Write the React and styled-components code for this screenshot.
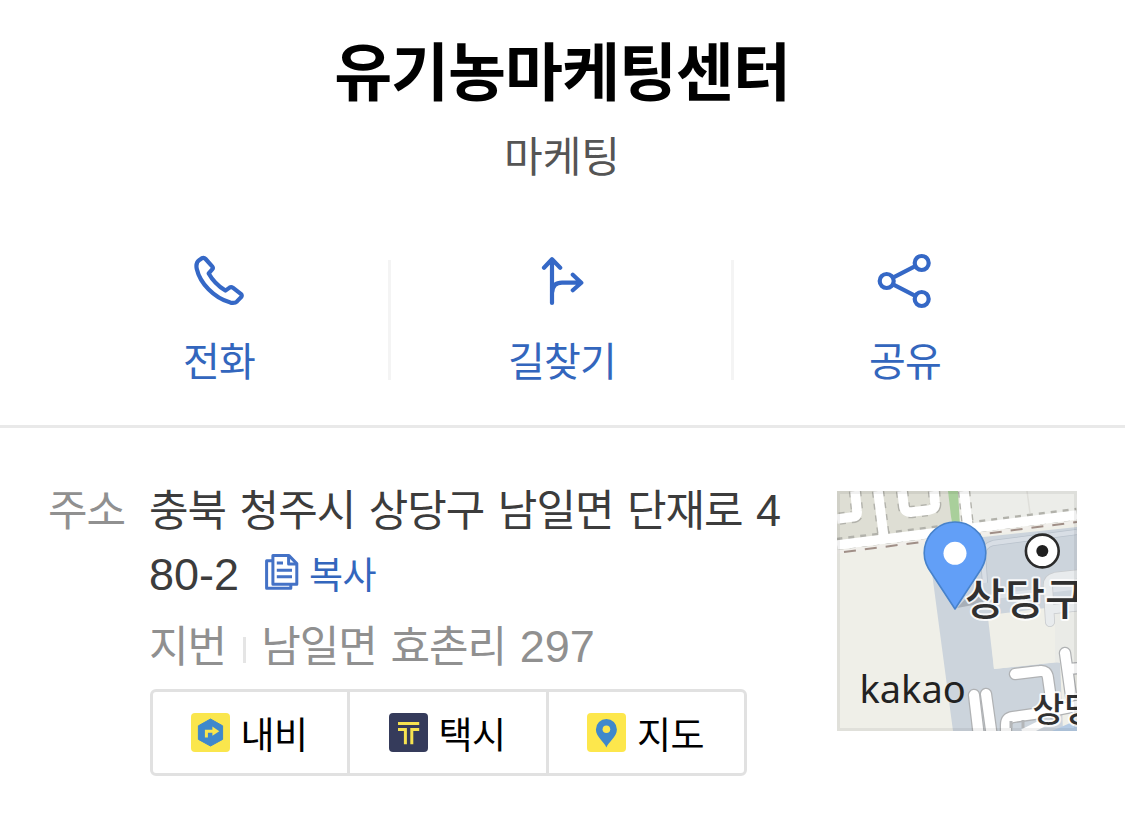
import React from "react"
import styled, { createGlobalStyle } from "styled-components"

const App = () => {
  return (
    <Page>
      <GlobalStyle />
      <Header>
        <Title>유기농마케팅센터</Title>
        <Category>마케팅</Category>
      </Header>
      <Actions>
        <Action>
          <PhoneIcon />
          <ActionLabel>전화</ActionLabel>
        </Action>
        <Action>
          <RouteIcon />
          <ActionLabel>길찾기</ActionLabel>
        </Action>
        <Action>
          <ShareIcon />
          <ActionLabel>공유</ActionLabel>
        </Action>
      </Actions>
      <Info>
        <InfoLabel>주소</InfoLabel>
        <InfoBody>
          <Address>
            충북 청주시 상당구 남일면 단재로 <Num>480-2</Num>
            <CopyButton>
              <CopyIcon />
              <CopyText>복사</CopyText>
            </CopyButton>
          </Address>
          <Jibun>
            지번
            <Bar />
            <span>
              남일면 효촌리 <Num>297</Num>
            </span>
          </Jibun>
          <AppLinks>
            <AppLink>
              <NaviIcon />
              내비
            </AppLink>
            <AppLink>
              <TaxiIcon />
              택시
            </AppLink>
            <AppLink>
              <MapIcon />
              지도
            </AppLink>
          </AppLinks>
        </InfoBody>
        <MapThumb />
      </Info>
    </Page>
  )
}

export default App

const PhoneIcon = () => (
  <LineIcon width="52" height="52" viewBox="0 0 52 52">
    <path d="M6.4 4.9 L8.9 3.2 Q11 2.2 12.6 4 L19.4 11.6 Q20.4 13 19.2 14.4 L15.7 18.4 Q21.3 28.5 32.4 35.6 L36.6 32.6 Q38.2 31.6 39.8 32.7 L47.8 38.9 Q49.4 40.4 48.1 42.1 L44 46.4 Q41.8 48.6 37.4 47.6 C20.7 43 7 28 3.8 14 Q2.4 7.8 6.4 4.9 Z" />
  </LineIcon>
)

const RouteIcon = () => (
  <LineIcon width="44" height="52" viewBox="0 0 44 52">
    <path d="M12 4.5 V48 M4 12.8 L12 4.2 L20.2 12.8 M12.3 37 Q12.8 27.7 22 27.7 H41 M32.8 19.8 L41.3 27.7 L32.8 35.2" />
  </LineIcon>
)

const ShareIcon = () => (
  <LineIcon width="58" height="58" viewBox="0 0 58 58">
    <circle cx="45.7" cy="11" r="7" />
    <circle cx="10.7" cy="29" r="7" />
    <circle cx="45.7" cy="47" r="7" />
    <path d="M17 25.6 L39.3 14.2 M17 32.4 L39.3 43.8" />
  </LineIcon>
)

const CopyIcon = () => (
  <CopySvg width="36" height="38" viewBox="0 0 36 38">
    <path d="M8 7.8 H2.6 V35.2 H26.8 V31.8" />
    <path d="M8.9 2.6 H25 L32.8 10.6 V31.2 H8.9 Z" />
    <path d="M24.6 3 V11 H32.6 M12.8 10 H19 M12.8 17.2 H28 M12.8 23.8 H28" />
  </CopySvg>
)

const NaviIcon = () => (
  <svg width="39" height="39" viewBox="0 0 39 39">
    <rect width="39" height="39" rx="4" fill="#fae64d" />
    <path
      d="M19.5 6 L31.6 12.8 V26.4 L19.5 33 L7.4 26.4 V12.8 Z"
      fill="#3f88cc"
      stroke="#3f88cc"
      strokeLinejoin="round"
    />
    <path d="M15.4 24.6 V18.2 H22" fill="none" stroke="#fae64d" strokeWidth="3" />
    <path d="M21.4 13.6 L28.3 18.2 L21.4 22.8 Z" fill="#fae64d" />
  </svg>
)

const TaxiIcon = () => (
  <svg width="39" height="39" viewBox="0 0 39 39">
    <rect width="39" height="39" rx="4" fill="#353b5b" />
    <path
      d="M9 10.4 H30.2 M9 16.6 H16.4 V31.3 M30.2 16.6 H22.8 V31.3"
      fill="none"
      stroke="#f7e350"
      strokeWidth="3"
    />
  </svg>
)

const MapIcon = () => (
  <svg width="39" height="39" viewBox="0 0 39 39">
    <rect width="39" height="39" rx="4" fill="#fde74c" />
    <path
      d="M19.4 34.4 C17.6 29 8.9 24 8.9 16.4 A10.5 10.5 0 0 1 29.9 16.4 C29.9 24 21.2 29 19.4 34.4 Z"
      fill="#3f88cc"
    />
    <circle cx="19.4" cy="16.2" r="3.8" fill="#fde74c" />
  </svg>
)

const MapThumb = () => (
  <MapSvg width="240" height="240" viewBox="0 0 240 240">
    <rect width="240" height="240" fill="#efefe8" />
    {/* blocks north of the railway */}
    <path d="M0 0 H114 V40 L0 55 Z" fill="#deded4" />
    <path d="M131 0 H240 V24 L131 38 Z" fill="#ecede9" />
    <path d="M190 0 L193 22" stroke="#dfdfda" strokeWidth="1.5" />
    <path d="M111 0 H121 L123 34 H115 Z" fill="#a9cf9b" />
    {/* school grounds */}
    <path
      d="M91 52 L240 36 V113 L152 124 L157 178 L223 171 L226 240 H116 Z"
      fill="#ccd4dc"
    />
    <path d="M151 127 L240 113 V174 L220 171 L157 178 Z" fill="#efefe8" />
    <path d="M218 120 L240 114 V174 L218 171 Z" fill="#eaebe7" />
    <path
      d="M148 92 L146 64 Q146 55 156 52 L240 41"
      fill="none"
      stroke="#b9c2cc"
      strokeWidth="6"
    />
    <path
      d="M148 92 L146 64 Q146 55 156 52 L240 41"
      fill="none"
      stroke="#d8dee5"
      strokeWidth="4.4"
    />
    <path d="M152 106 L240 96" stroke="#dde2e8" strokeWidth="5" />
    <g fill="none" strokeLinecap="round">
      <path
        d="M244 83 L218 86 Q210 88 211 96 L213 131 M217 118 L244 115"
        stroke="#c8cbce"
        strokeWidth="10"
      />
      <path
        d="M244 83 L218 86 Q210 88 211 96 L213 131 M217 118 L244 115"
        stroke="#e8ebed"
        strokeWidth="8.4"
      />
    </g>
    {/* streets */}
    <g fill="none" stroke="#b2b2ab" strokeWidth="12.4" strokeDasharray="6 6">
      <path d="M18 0 L20 20 Q21 26 15 26 L0 28" />
      <path d="M41 0 L47 48" />
      <path d="M65 0 L67 16 Q68 22 75 21 L92 19 Q99 18 98 12 L97 0" />
      <path d="M127 0 L131 36" />
      <path d="M0 53 L240 23" />
    </g>
    <g fill="none" stroke="#fff" strokeWidth="9.6">
      <path d="M18 0 L20 20 Q21 26 15 26 L0 28" />
      <path d="M41 0 L47 48" />
      <path d="M65 0 L67 16 Q68 22 75 21 L92 19 Q99 18 98 12 L97 0" />
      <path d="M127 0 L131 36" />
      <path d="M0 54 L240 24" />
    </g>
    <path d="M0 61 L240 31" stroke="#f1efeb" strokeWidth="3.4" />
    <path
      d="M7 61 L240 31"
      stroke="#a08f87"
      strokeWidth="2"
      strokeDasharray="12 9"
    />
    {/* campus roads */}
    <g fill="none" strokeLinecap="round" strokeLinejoin="round">
      <g stroke="#b0b2b4" strokeWidth="12.5">
        <path d="M178 183 L203 180 Q210 179 211 187 L216 222" />
        <path d="M137 204 L142 246" />
        <path d="M149 203 L155 246" />
        <path d="M228 162 L234 205 M231 178 L244 177" />
        <path d="M169 246 V234 Q169 227 176 226 L204 222 L244 214" />
      </g>
      <g stroke="#fff" strokeWidth="10">
        <path d="M178 183 L203 180 Q210 179 211 187 L216 222" />
        <path d="M137 204 L142 246" />
        <path d="M149 203 L155 246" />
        <path d="M228 162 L234 205 M231 178 L244 177" />
        <path d="M169 246 V234 Q169 227 176 226 L204 222 L244 214" />
      </g>
    </g>
    <path d="M174 230 V237 M186 229 V237" stroke="#b4b6b8" strokeWidth="3" />
    <path d="M186 242 L206 232" stroke="#fff" strokeWidth="8" />
    <path d="M215 240 L240 229 V240 Z" fill="#b5cbe4" />
    <circle cx="205.3" cy="60" r="16.4" fill="#fff" stroke="#2b2b2b" strokeWidth="2.6" />
    <circle cx="205.3" cy="60" r="6" fill="#1f1f1f" />
    <path d="M120 117 L132 104 Q144 104 147 112 Z" fill="#8f969e" opacity=".6" />
    <PlaceName x="128" y="123.5" fontSize="43.5">
      상당구
    </PlaceName>
    <PlaceName x="195.5" y="230.5" fontSize="34.5">
      상당
    </PlaceName>
    <Kakao x="22.5" y="212">
      kakao
    </Kakao>
    <path
      d="M118 118 L91.5 77.5 A30.8 30.8 0 1 1 144.5 77.5 Z"
      fill="#629ff7"
      stroke="#4782cb"
      strokeWidth="1.6"
      strokeLinejoin="round"
    />
    <circle cx="118" cy="62.3" r="11.5" fill="#fff" />
    <rect
      x="1.5"
      y="1.5"
      width="237"
      height="237"
      fill="none"
      stroke="#000"
      strokeOpacity=".06"
      strokeWidth="3"
    />
  </MapSvg>
)

const GlobalStyle = createGlobalStyle`
  body {
    margin: 0;
    background: #fff;
  }
  * {
    box-sizing: border-box;
  }
`

const Page = styled.div`
  width: 1125px;
  height: 814px;
  overflow: hidden;
  background: #fff;
  font-family: "Liberation Sans", "Noto Sans CJK KR", sans-serif;
  color: #3c3c3c;
`

const Header = styled.header`
  padding: 33px 1px 0 0;
  text-align: center;
`

const Title = styled.h1`
  margin: 0;
  font-size: 63px;
  line-height: 80px;
  font-weight: 700;
  letter-spacing: -1px;
  color: #000;
`

const Category = styled.p`
  margin: 15px 0 0;
  font-size: 42px;
  line-height: 60px;
  color: #555;
`

const Actions = styled.nav`
  display: flex;
  height: 240px;
  padding: 72px 48px 0;
  border-bottom: 3px solid #e9e9e9;
`

const Action = styled.div`
  flex: 1;
  display: flex;
  flex-direction: column;
  align-items: center;
  justify-content: space-between;
  height: 120px;
  padding-left: 2px;
  border-right: 3px solid #f4f4f4;

  &:last-child {
    border-color: transparent;
  }
`

const LineIcon = styled.svg`
  margin-top: ${props => (props.height === "58" ? "-8px" : "-5px")};
  fill: none;
  stroke: #3568c6;
  stroke-width: 4.2;
  stroke-linecap: round;
  stroke-linejoin: round;
`

const ActionLabel = styled.span`
  font-size: 40px;
  line-height: 36px;
  letter-spacing: -0.8px;
  color: #3366bd;
`

const Info = styled.section`
  display: flex;
  padding: 51px 48px 0;
`

const InfoLabel = styled.div`
  width: 101px;
  font-size: 43px;
  line-height: 64px;
  letter-spacing: -1px;
  color: #909090;
`

const InfoBody = styled.div`
  width: 645px;
`

const Address = styled.p`
  margin: 0;
  font-size: 43px;
  line-height: 64px;
  letter-spacing: -1px;
  word-spacing: 2.5px;
  word-break: break-all;
`

const Num = styled.span`
  font-size: 45px;
  line-height: 1;
  letter-spacing: 0;
`

const CopyButton = styled.span`
  display: inline-flex;
  align-items: center;
  gap: 9px;
  height: 64px;
  margin-left: 25px;
  vertical-align: top;
  color: #3366bd;
`

const CopySvg = styled.svg`
  margin-bottom: 7px;
  fill: none;
  stroke: #4472c6;
  stroke-width: 3;
  stroke-linejoin: round;
`

const CopyText = styled.span`
  padding-top: 4px;
  font-size: 37px;
  line-height: 40px;
  letter-spacing: -0.6px;
`

const Jibun = styled.p`
  display: flex;
  align-items: center;
  margin: 8px 0 0;
  font-size: 43px;
  line-height: 64px;
  letter-spacing: -1px;
  word-spacing: 2.7px;
  color: #909090;
`

const Bar = styled.i`
  width: 3px;
  height: 26px;
  margin: 6px 15px 0 17px;
  background: #e5e5e5;
`

const AppLinks = styled.div`
  display: grid;
  grid-template-columns: 197px 199px 195px;
  width: 597px;
  height: 87px;
  margin: 10px 0 0 1px;
  border: 3px solid #e1e1e1;
  border-radius: 6px;
`

const AppLink = styled.a`
  display: flex;
  align-items: center;
  justify-content: center;
  gap: 11px;
  padding-right: 2px;
  font-size: 37px;
  letter-spacing: -0.6px;
  color: #000;

  &:not(:last-child) {
    border-right: 3px solid #e1e1e1;
  }
`

const MapSvg = styled.svg`
  margin: 12px 0 0 43px;
  flex: none;
`

const PlaceName = styled.text`
  font-family: "Noto Sans CJK KR", sans-serif;
  font-weight: 500;
  fill: #303030;
  stroke: #fff;
  stroke-width: 4px;
  stroke-opacity: 0.85;
  stroke-linejoin: round;
  paint-order: stroke;
`

const Kakao = styled.text`
  font-family: "Noto Sans", sans-serif;
  font-size: 38px;
  fill: #222;
`
